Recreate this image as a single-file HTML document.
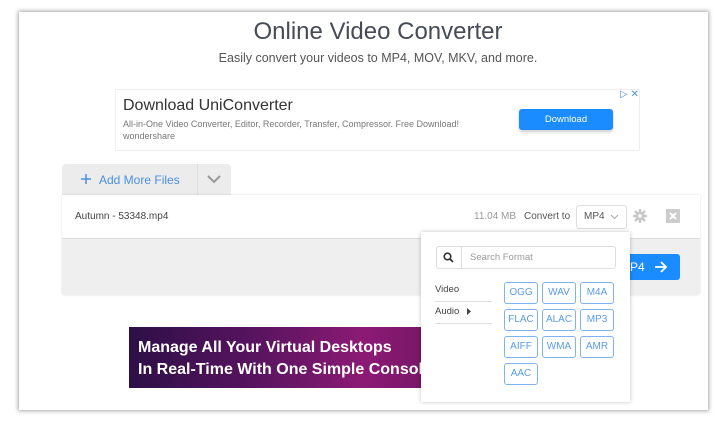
<!DOCTYPE html><html><head><style>
*{margin:0;padding:0;box-sizing:border-box}
body{width:720px;height:421px;background:#fff;font-family:"Liberation Sans",sans-serif;position:relative;overflow:hidden}
.a{position:absolute}
.frame{left:19px;top:12px;width:689px;height:398px;background:#fff;box-shadow:0 0 4px 1px rgba(0,0,0,.35)}
.fb{border:1px solid #7fb2f0;border-radius:3px;color:#5a9be6;font-size:10px;text-align:center;line-height:20px;width:34px;height:22px}
</style></head><body>
<div class="a frame"></div>
<div class="a" style="left:0;width:756px;top:18px;text-align:center;font-size:24px;color:#454c56">Online Video Converter</div>
<div class="a" style="left:0;width:756px;top:51px;text-align:center;font-size:12.5px;color:#555">Easily convert your videos to MP4, MOV, MKV, and more.</div>
<div class="a" style="left:115px;top:89px;width:525px;height:62px;border:1px solid #eee"></div>
<div class="a" style="left:123px;top:97px;font-size:16px;color:#333">Download UniConverter</div>
<div class="a" style="left:123px;top:119px;font-size:9px;color:#777">All-in-One Video Converter, Editor, Recorder, Transfer, Compressor. Free Download!</div>
<div class="a" style="left:123px;top:131px;font-size:9px;color:#777">wondershare</div>
<div class="a" style="left:620px;top:89px;font-size:10px;color:#4a90e2">▷ ✕</div>
<div class="a" style="left:519px;top:109px;width:94px;height:21px;background:#1a8cff;border-radius:3px;color:#fff;font-size:9.5px;text-align:center;line-height:21px;box-shadow:0 2px 3px rgba(0,0,0,.2)">Download</div>
<div class="a" style="left:62px;top:164px;width:169px;height:32px;background:#ececec;border-radius:4px 4px 0 0"></div>
<div class="a" style="left:197px;top:164px;width:1px;height:32px;background:#ddd"></div>
<svg class="a" style="left:80px;top:173px" width="12" height="12"><path d="M6 1V11M1 6H11" stroke="#4a90e2" stroke-width="1.5"/></svg>
<div class="a" style="left:99px;top:173px;font-size:12px;color:#4a90e2">Add More Files</div>
<svg class="a" style="left:207px;top:174px" width="14" height="10"><path d="M1 2L7 8L13 2" stroke="#999" stroke-width="2" fill="none"/></svg>
<div class="a" style="left:62px;top:195px;width:638px;height:100px;background:#efefef;border-radius:0 0 3px 3px;box-shadow:0 0 2px rgba(0,0,0,.15)"></div>
<div class="a" style="left:62px;top:195px;width:638px;height:44px;background:#fff;border-bottom:1px solid #ddd"></div>
<div class="a" style="left:75px;top:211px;font-size:10px;color:#444">Autumn - 53348.mp4</div>
<div class="a" style="left:474px;top:211px;font-size:10px;color:#999">11.04 MB</div>
<div class="a" style="left:524px;top:211px;font-size:10px;color:#555">Convert to</div>
<div class="a" style="left:576px;top:205px;width:51px;height:24px;border:1px solid #ddd;border-radius:3px;font-size:10px;color:#555;line-height:22px;padding-left:7px">MP4</div>
<svg class="a" style="left:610px;top:214px" width="9" height="6"><path d="M1 1L4.5 4.5L8 1" stroke="#aaa" stroke-width="1" fill="none"/></svg>
<svg class="a" style="left:633px;top:209px" width="14" height="14" viewBox="0 0 14 14"><g stroke="#c8c8c8" stroke-width="2.4"><path d="M7 0V14M0 7H14M2 2L12 12M12 2L2 12"/></g><circle cx="7" cy="7" r="4.3" fill="#c8c8c8"/><circle cx="7" cy="7" r="1.8" fill="#fff"/></svg>
<div class="a" style="left:666px;top:209px;width:14px;height:14px;background:#ccc"></div>
<svg class="a" style="left:666px;top:209px" width="14" height="14"><path d="M4 4L10 10M10 4L4 10" stroke="#fff" stroke-width="2"/></svg>
<div class="a" style="left:600px;top:254px;width:80px;height:26px;background:#1a8cff;border-radius:3px;color:#fff;font-size:12px;line-height:26px;padding-left:30px">P4</div>
<svg class="a" style="left:654px;top:261px" width="14" height="12"><path d="M1 6H12M7 1L12 6L7 11" stroke="#fff" stroke-width="1.8" fill="none"/></svg>
<div class="a" style="left:129px;top:327px;width:292px;height:61px;background:linear-gradient(90deg,#2d0f47,#5a1460 45%,#8c1a75 80%,#7a1768);color:#fff;font-weight:bold;font-size:16px;line-height:22px;padding:10px 0 0 9px;white-space:nowrap;overflow:hidden">Manage All Your Virtual Desktops<br>In Real-Time With One Simple Console</div>
<div class="a" style="left:421px;top:232px;width:209px;height:170px;background:#fff;box-shadow:0 0 4px rgba(0,0,0,.25)"></div>
<div class="a" style="left:436px;top:246px;width:180px;height:23px;border:1px solid #ddd;border-radius:3px"></div>
<div class="a" style="left:461px;top:246px;width:1px;height:23px;background:#ddd"></div>
<svg class="a" style="left:443px;top:252px" width="11" height="11"><circle cx="4.5" cy="4.5" r="3.3" stroke="#333" stroke-width="1.6" fill="none"/><path d="M7 7L10 10" stroke="#333" stroke-width="1.8"/></svg>
<div class="a" style="left:470px;top:252px;font-size:9.5px;color:#999">Search Format</div>
<div class="a" style="left:435px;top:284px;font-size:9.5px;color:#444">Video</div>
<div class="a" style="left:435px;top:301px;width:57px;height:1px;background:#ddd"></div>
<div class="a" style="left:435px;top:306px;font-size:9.5px;color:#444">Audio</div>
<svg class="a" style="left:467px;top:308px" width="5" height="7"><path d="M0 0L4 3.5L0 7Z" fill="#444"/></svg>
<div class="a" style="left:435px;top:323px;width:57px;height:1px;background:#ddd"></div>
<div class="a fb" style="left:504px;top:282px">OGG</div><div class="a fb" style="left:542px;top:282px">WAV</div><div class="a fb" style="left:580px;top:282px">M4A</div>
<div class="a fb" style="left:504px;top:309px">FLAC</div><div class="a fb" style="left:542px;top:309px">ALAC</div><div class="a fb" style="left:580px;top:309px">MP3</div>
<div class="a fb" style="left:504px;top:336px">AIFF</div><div class="a fb" style="left:542px;top:336px">WMA</div><div class="a fb" style="left:580px;top:336px">AMR</div>
<div class="a fb" style="left:504px;top:363px">AAC</div>
</body></html>
